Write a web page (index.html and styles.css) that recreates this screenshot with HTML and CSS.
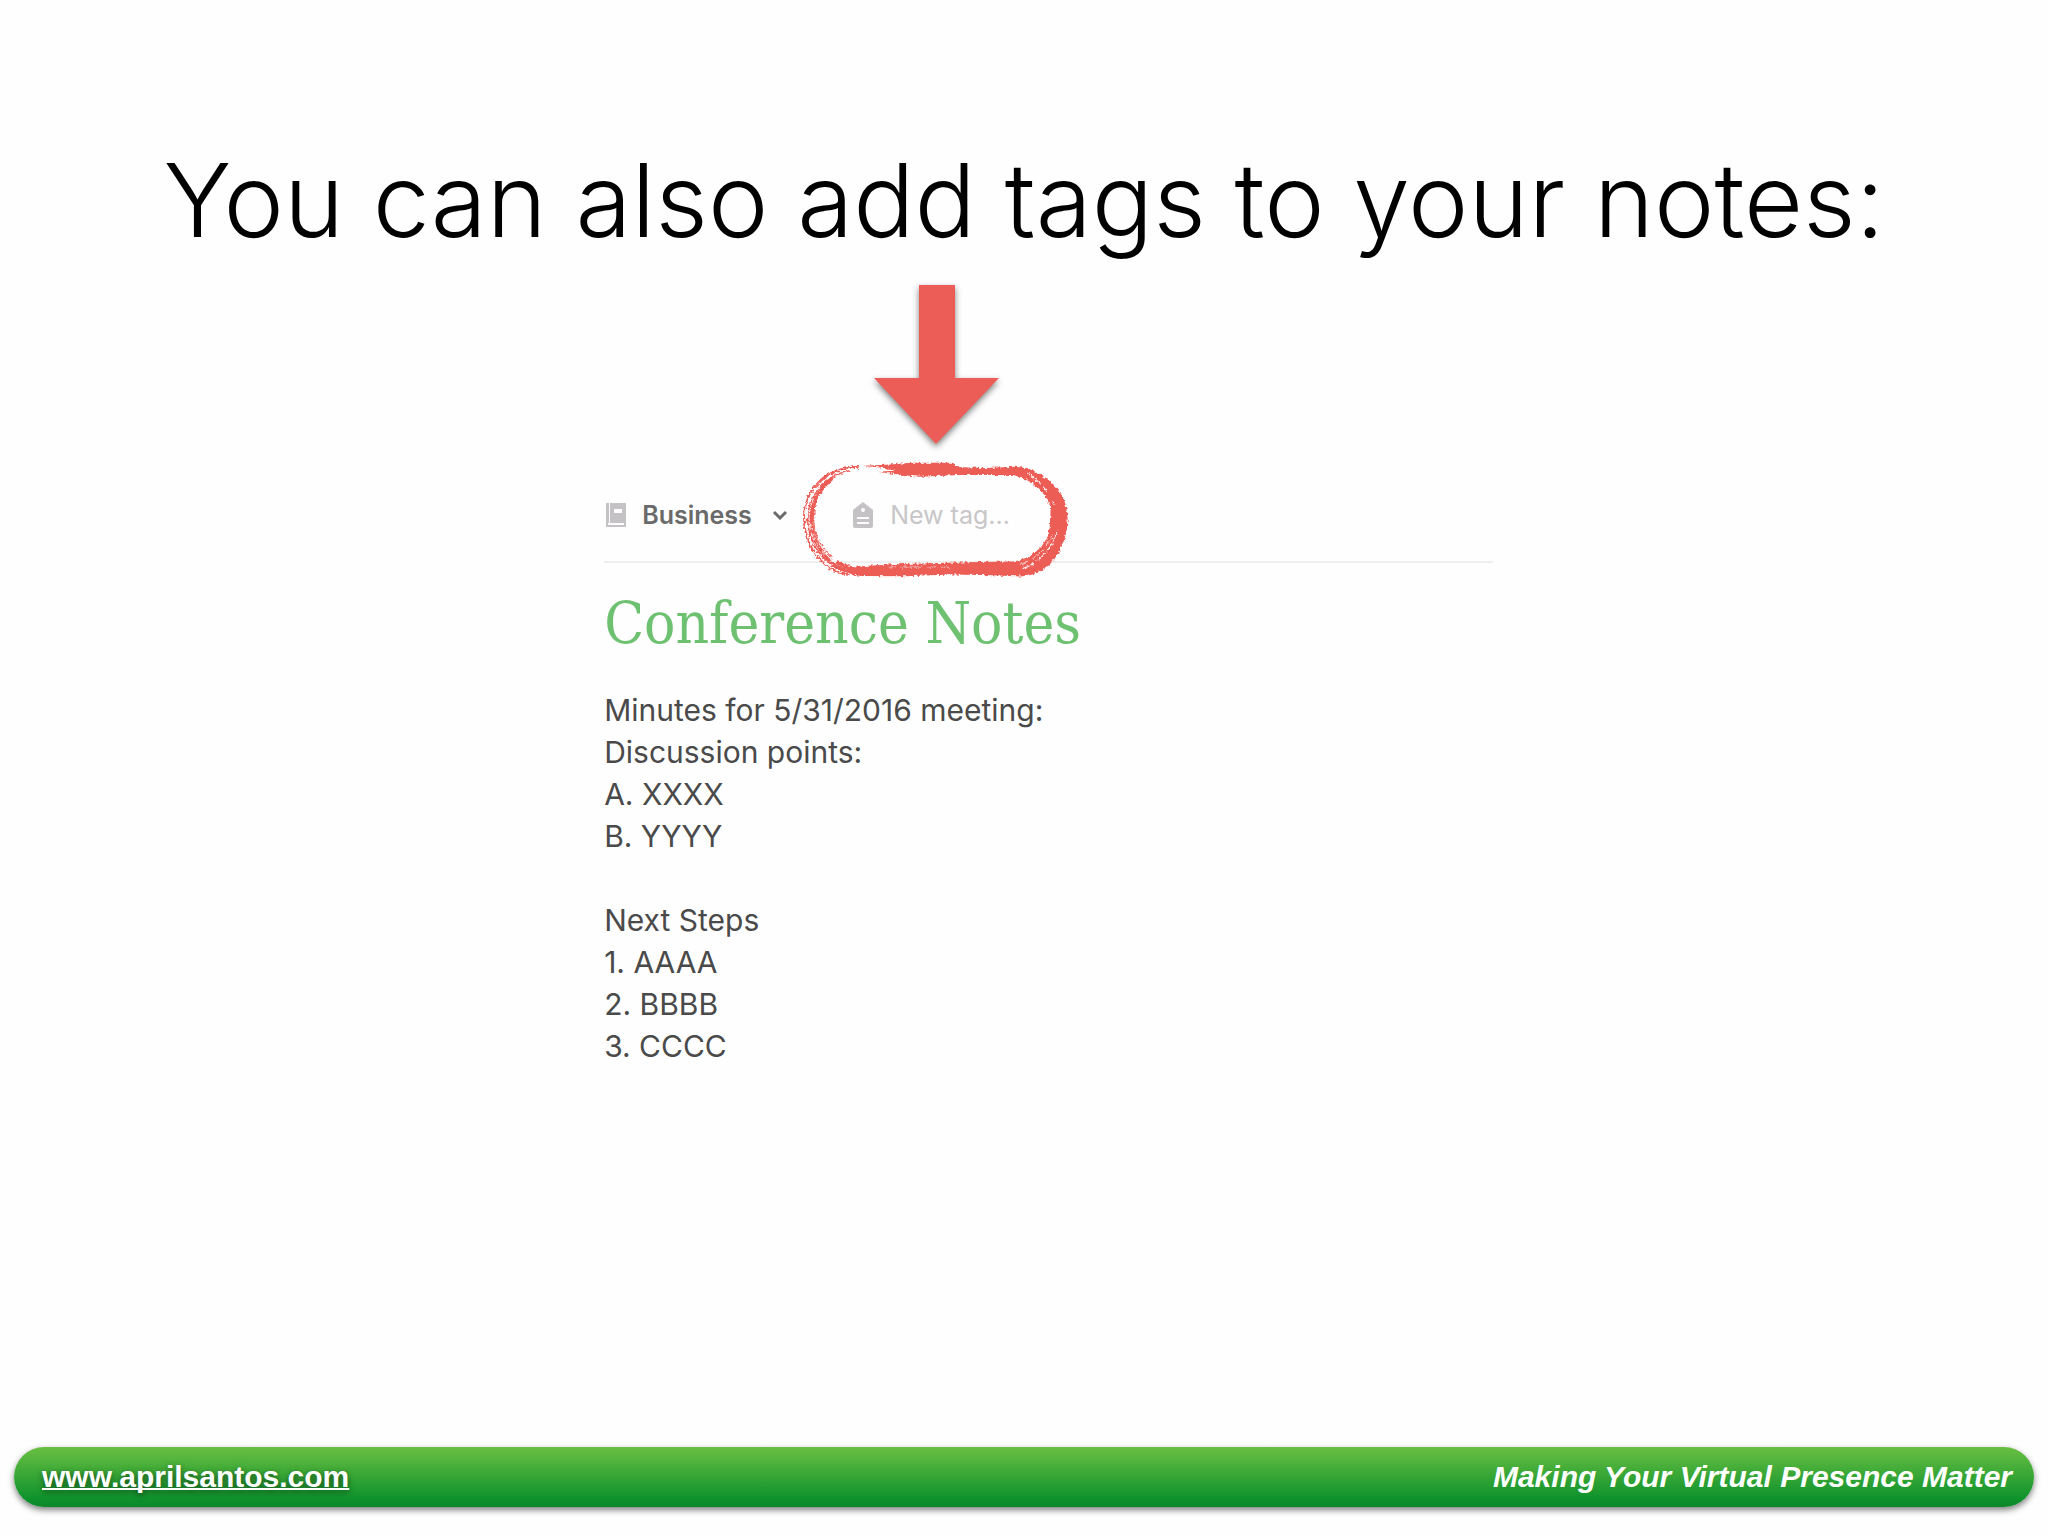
FILE: index.html
```html
<!DOCTYPE html>
<html lang="en">
<head>
    <meta charset="UTF-8">
    <meta name="viewport" content="width=device-width, initial-scale=1.0">
    <title>You can also add tags to your notes</title>
    <link rel="stylesheet" href="styles.css">
</head>
<body>
    <header>
        <h1>You can also add tags to your notes:</h1>
    </header>
    <main>
        <svg class="arrow" viewBox="0 0 125 160" aria-hidden="true">
            <path d="M45 0H81V93H125L62 159L0 93H45Z"/>
        </svg>

        <div class="toolbar">
            <label class="notebook" for="notebook">
                <svg class="notebook-icon" viewBox="0 0 20 25" aria-hidden="true">
                    <path d="M0 0H3V20H0ZM4 0H20V20H4Z" fill="#c4c2c4"/>
                    <path d="M1 20V23H19V20" fill="none" stroke="#c4c2c4" stroke-width="2"/>
                    <path d="M8 6H16V10H8Z" fill="#fefefe"/>
                </svg>
                <select id="notebook" aria-label="Notebook">
                    <option>Business</option>
                </select>
                <svg class="chevron" viewBox="0 0 16 10" aria-hidden="true">
                    <path d="M2 2L8 8L14 2"/>
                </svg>
            </label>
            <label class="tag" for="tag">
                <svg class="tag-icon" viewBox="0 0 22 27" aria-hidden="true">
                    <path fill-rule="evenodd" d="M11 0L21 8V24Q21 26 19 26H3Q1 26 1 24V8ZM11 6A2 2 0 1 0 11 10A2 2 0 1 0 11 6ZM5 15V17H17V15ZM5 20V22H17V20Z"/>
                </svg>
                <input type="text" id="tag" placeholder="New tag..." aria-label="New tag">
                <!-- brush circle around the tag field -->
                <svg class="circle" viewBox="70 570 800 350" aria-hidden="true">
                    <filter id="rough" x="-5%" y="-5%" width="110%" height="110%">
                        <feTurbulence type="fractalNoise" baseFrequency="0.12" numOctaves="2" seed="4"/>
                        <feDisplacementMap in="SourceGraphic" scale="14" xChannelSelector="R" yChannelSelector="G"/>
                    </filter>
                    <g filter="url(#rough)">
                        <path class="brush" d="M250 584L320 581L400 575H520L530 588L620 591L710 587Q755 588 800 620Q866 668 866 745Q866 805 830 858Q796 910 725 916L640 912L520 910L380 915L250 914Q195 910 160 880L180 868Q200 885 235 886L330 880L450 876L600 872L700 871Q752 868 788 825Q816 790 813 742Q822 690 780 655Q745 620 700 612H540L420 617L360 610L300 603L330 592Z"/>
                        <path class="strand" stroke-width="6" d="M240 587Q165 590 122 630Q76 675 76 742Q78 815 125 866Q160 905 210 911"/>
                        <path class="strand" stroke-width="5" d="M212 599Q155 610 118 655Q86 700 87 745Q90 812 133 858Q165 895 215 903"/>
                        <path class="strand" stroke-width="11" d="M160 622Q98 675 98 745Q101 812 144 860Q172 890 220 895"/>
                        <path class="strand" stroke-width="3" d="M112 690Q98 740 112 790Q125 825 158 858"/>
                        <path class="strand" stroke-width="3" d="M165 604Q130 620 112 650"/>
                        <path class="scratch" stroke-width="3" stroke-dasharray="50 12 22 30" d="M745 606Q800 640 825 700"/>
                        <path class="scratch" stroke-width="3" stroke-dasharray="30 9 60 12" d="M722 618Q785 645 812 706"/>
                        <path class="scratch" stroke-width="3" stroke-dasharray="70 8 34 10" d="M834 778Q812 860 730 894"/>
                        <path class="scratch" stroke-width="2" stroke-dasharray="40 14" d="M820 790Q796 855 722 880"/>
                        <path class="scratch" stroke-width="2" stroke-dasharray="24 14 60 20" d="M330 887L510 888"/>
                        <path class="scratch" stroke-width="4" d="M265 593L310 592M290 600L345 597"/>
                        <path class="scratch" stroke-width="2" stroke-dasharray="20 9" d="M97 700Q88 750 107 800Q135 865 200 893"/>
                    </g>
                </svg>
            </label>
        </div>

        <article>
            <h2>Conference Notes</h2>
            <p>
                Minutes for 5/31/2016 meeting:<br>
                Discussion points:<br>
                A. XXXX<br>
                B. YYYY
            </p>
            <p>
                Next Steps<br>
                1. AAAA<br>
                2. BBBB<br>
                3. CCCC
            </p>
        </article>
    </main>
    <footer>
        <a href="#">www.aprilsantos.com</a>
        <em>Making Your Virtual Presence Matter</em>
    </footer>
</body>
</html>
```
FILE: styles.css
```css
* {
    box-sizing: border-box;
}

body {
    font-family: Inter, "Liberation Sans", sans-serif;
    margin: 0;
    min-height: 100vh;
    display: flex;
    flex-direction: column;
    background-color: #fefefe;
    color: #4a4a4a;
}

header {
    padding: 136px 24px 0;
    text-align: center;
}

h1 {
    margin: 0;
    font-size: 102px;
    font-weight: 300;
    line-height: 128px;
    color: #000;
}

main {
    flex: 1;
    width: 43.4%;
    margin-left: 29.5%;
    padding-top: 21px;
}

.arrow {
    display: block;
    width: 125px;
    height: 160px;
    margin-left: 270px;
    overflow: visible;
    fill: #ec5d57;
    filter: drop-shadow(0 3px 3px rgba(0, 0, 0, 0.5));
}

.toolbar {
    display: flex;
    align-items: center;
    gap: 64px;
    height: 94px;
    margin-top: 24px;
    padding-left: 2px;
    border-bottom: 2px solid #efefef;
}

.notebook, .tag {
    display: flex;
    align-items: center;
    gap: 16px;
}

.notebook-icon {
    width: 20px;
    height: 25px;
}

select, input {
    margin: 0;
    padding: 0;
    border: none;
    background: none;
    font-family: inherit;
    font-size: 25px;
    line-height: 32px;
}

select {
    appearance: none;
    font-weight: 600;
    color: #6a6a6a;
}

.chevron {
    width: 16px;
    height: 10px;
    margin-left: 4px;
    fill: none;
    stroke: #6a6a6a;
    stroke-width: 3;
}

.tag {
    position: relative;
}

.tag-icon {
    width: 22px;
    height: 27px;
    fill: #c4c2c4;
}

input {
    width: 140px;
}

input::placeholder {
    color: #c8c6c8;
    opacity: 1;
}

/* lies over the tag field */
.circle {
    position: absolute;
    top: -38px;
    left: -50px;
    width: 267px;
    height: 117px;
    overflow: visible;
    pointer-events: none;
}

.brush {
    fill: #ec5d57;
}

.strand {
    fill: none;
    stroke: #ec5d57;
}

.scratch {
    fill: none;
    stroke: #fefefe;
}

h2 {
    margin: 24px 0 30px;
    font-family: "DejaVu Serif Condensed", "DejaVu Serif", serif;
    font-size: 58px;
    font-weight: 400;
    line-height: 72px;
    color: #6fc172;
}

p {
    margin: 0 0 42px;
    font-size: 30px;
    line-height: 42px;
}

footer {
    display: flex;
    align-items: center;
    justify-content: space-between;
    height: 60px;
    margin: 0 14px 29px;
    padding: 0 22px 0 28px;
    border-radius: 30px;
    background: linear-gradient(#6abf42, #0f932c 85%, #0d862b);
    box-shadow: 0 3px 6px rgba(0, 0, 0, 0.5);
    font-family: "Liberation Sans", Arial, sans-serif;
    font-size: 30px;
    font-weight: bold;
    color: white;
}

footer a {
    color: white;
    text-shadow: 0 2px 6px rgba(0, 0, 0, 0.5);
    text-decoration-skip-ink: none;
    text-decoration-thickness: 2px;
}
```
